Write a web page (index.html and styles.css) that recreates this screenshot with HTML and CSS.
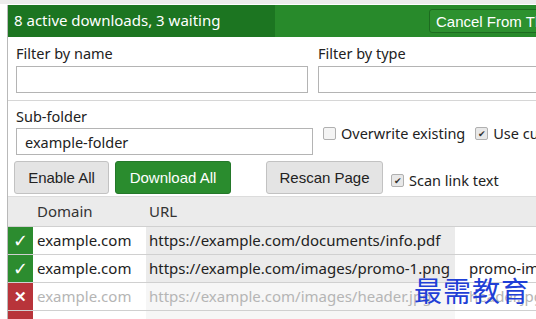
FILE: index.html
```html
<!DOCTYPE html>
<html>
<head>
<meta charset="utf-8">
<link rel="stylesheet" href="styles.css">
</head>
<body>
<div class="topstrip"></div>
<div class="app">
  <div class="header">
    <div class="status">8 active downloads, 3 waiting</div>
    <div class="header-right">
      <button class="btn btn-cancel">Cancel From This Page</button>
    </div>
  </div>

  <div class="filters">
    <div class="field field-name">
      <label class="label">Filter by name</label>
      <input class="input" type="text">
    </div>
    <div class="field field-type">
      <label class="label">Filter by type</label>
      <input class="input" type="text">
    </div>
  </div>

  <div class="options">
    <div class="field field-sub">
      <label class="label">Sub-folder</label>
      <input class="input" type="text" value="example-folder">
    </div>
    <label class="check check-overwrite"><span class="box"></span>Overwrite existing</label>
    <label class="check"><span class="box checked">&#10004;</span>Use custom</label>
  </div>

  <div class="actions">
    <button class="btn btn-gray btn-enable">Enable All</button>
    <button class="btn btn-green">Download All</button>
    <button class="btn btn-gray btn-rescan">Rescan Page</button>
    <label class="check"><span class="box checked">&#10004;</span>Scan link text</label>
  </div>

  <div class="table">
    <div class="row head">
      <div class="c-st"></div>
      <div class="c-dom">Domain</div>
      <div class="c-url">URL</div>
      <div class="c-name"></div>
    </div>
    <div class="row">
      <div class="c-st ok">&#10003;</div>
      <div class="c-dom">example.com</div>
      <div class="c-url">https://example.com/documents/info.pdf</div>
      <div class="c-name"></div>
    </div>
    <div class="row">
      <div class="c-st ok">&#10003;</div>
      <div class="c-dom">example.com</div>
      <div class="c-url">https://example.com/images/promo-1.png</div>
      <div class="c-name">promo-image-1.png</div>
    </div>
    <div class="row off">
      <div class="c-st bad">&#10005;</div>
      <div class="c-dom">example.com</div>
      <div class="c-url">https://example.com/images/header.jpg</div>
      <div class="c-name">header.jpg</div>
    </div>
    <div class="row off">
      <div class="c-st bad">&#10005;</div>
      <div class="c-dom">example.com</div>
      <div class="c-url">https://example.com/images/footer.jpg</div>
      <div class="c-name">footer.jpg</div>
    </div>
  </div>
</div>
<div class="watermark">最需教育</div>
</body>
</html>
```

FILE: styles.css
```css
html, body {
  margin: 0;
  padding: 0;
  background: #ffffff;
  overflow: hidden;
  width: 536px;
  height: 319px;
}
body {
  font-family: "Noto Sans", "Open Sans", sans-serif;
  color: #222;
  position: relative;
}
.topstrip {
  height: 4px;
  background: #ececec;
}
.app {
  margin-left: 7px;
  border-left: 1px solid #b9b9b9;
  width: 700px;
}
.header {
  display: flex;
  height: 32px;
  background: #1f7d23;
  margin-top: 1px;
}
.status {
  width: 261px;
  padding-left: 6px;
  color: #fff;
  font-size: 15px;
  line-height: 31px;
  background: #1c7521;
  white-space: nowrap;
}
.header-right {
  flex: 1;
  background: #288a2b;
  padding-left: 154px;
  padding-top: 4px;
}
.btn {
  font-family: "Liberation Sans", Arial, sans-serif;
  font-size: 15px;
  border-radius: 3px;
  cursor: pointer;
  white-space: nowrap;
}
.btn-cancel {
  height: 24px;
  padding: 0 6px;
  background: #2d912f;
  color: #fff;
  border: 1px solid #1d6b20;
}
.label {
  display: block;
  font-size: 14.5px;
  color: #222;
  line-height: 18px;
}
.filters {
  display: flex;
  gap: 10px;
  padding: 7px 0 0 8px;
  height: 56px;
  border-bottom: 1px solid #d6d6d6;
}
.field-name .input { width: 292px; }
.field-type .input { width: 300px; }
.input {
  box-sizing: border-box;
  height: 27px;
  margin-top: 4px;
  border: 1px solid #b4b4b4;
  font-family: "Noto Sans", "Open Sans", sans-serif;
  font-size: 14.5px;
  padding: 0 8px;
  color: #222;
  display: block;
}
.options {
  display: flex;
  align-items: flex-start;
  padding: 6px 0 0 8px;
}
.field-sub .input { width: 297px; margin-top: 3px; }
.check {
  display: flex;
  align-items: center;
  font-size: 14.5px;
  color: #222;
  white-space: nowrap;
}
.check-overwrite { margin-left: 10px; margin-right: 10px; }
.options .check { margin-top: 16px; }
.box {
  box-sizing: border-box;
  width: 13px;
  height: 13px;
  border: 1px solid #b0b0b0;
  border-radius: 2px;
  background: #f4f4f4;
  margin-right: 5px;
  font-size: 9px;
  line-height: 11px;
  text-align: center;
  color: #333;
  display: inline-block;
}
.box.checked { background: #e8e8e8; }
.actions {
  display: flex;
  align-items: flex-start;
  padding: 6px 0 0 6px;
  height: 42px;
  box-sizing: border-box;
  border-bottom: 1px solid #dcdcdc;
}
.btn-gray, .btn-green {
  height: 33px;
  padding: 0;
  text-align: center;
}
.btn-enable { width: 95px; }
.btn-gray {
  background: #e4e4e4;
  color: #222;
  border: 1px solid #c2c2c2;
}
.btn-green {
  width: 116px;
  background: #2a8c2e;
  color: #fff;
  border: 1px solid #24782a;
  margin-left: 6px;
}
.btn-rescan { width: 117px; margin-left: 35px; }
.actions .check { margin-left: 8px; margin-top: 9px; }
.row {
  display: flex;
  height: 27px;
  border-bottom: 1px solid #d0d0d0;
  font-size: 15px;
  line-height: 27px;
  white-space: nowrap;
}
.row.head {
  height: 29px;
  line-height: 29px;
  background: #ebebeb;
  color: #333;
}
.c-st {
  width: 25px;
  flex: none;
  text-align: center;
  color: #fff;
  font-size: 18px;
}
.c-st.ok { background: #2c8c2f; }
.c-st.bad { background: #b8343a; font-size: 15px; font-weight: bold; }
.c-dom { width: 109px; flex: none; padding-left: 4px; }
.c-url { width: 306px; flex: none; padding-left: 3px; overflow: hidden; }
.row:not(.head) .c-url { background: #ebebeb; }
.row.off .c-url { background: #f6f6f6; }
.c-name { padding-left: 14px; }
.row.off .c-dom, .row.off .c-url, .row.off .c-name { color: #b5b5b5; }
.watermark {
  position: absolute;
  left: 414px;
  top: 270px;
  color: #1f3fd6;
  font-family: "Noto Sans CJK SC", sans-serif;
  font-size: 28px;
  letter-spacing: 1px;
  line-height: 40px;
  white-space: nowrap;
}
```
